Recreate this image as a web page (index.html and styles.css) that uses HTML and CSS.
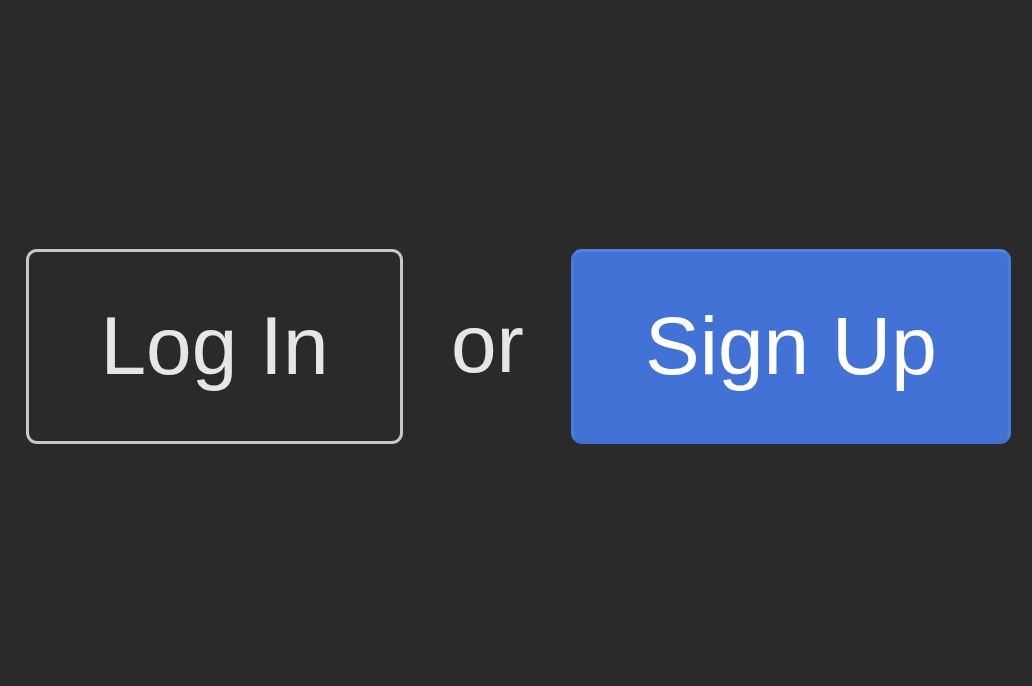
FILE: index.html
```html
<!DOCTYPE html>
<html>
<head>
<meta charset="utf-8">
<link rel="stylesheet" href="styles.css">
</head>
<body>
<div class="auth">
  <button class="btn btn-login">Log In</button>
  <span class="or">or</span>
  <button class="btn btn-signup">Sign Up</button>
</div>
</body>
</html>
```
FILE: styles.css
```css
html, body {
  margin: 0;
  padding: 0;
  height: 100%;
  background: #2a2a2a;
}
body {
  font-family: "Liberation Sans", Arial, sans-serif;
}
.auth {
  display: flex;
  align-items: center;
  height: 686px;
  padding: 6px 0 0 26px;
  box-sizing: border-box;
}
.btn {
  font-family: "Liberation Sans", Arial, sans-serif;
  font-size: 82px;
  box-sizing: border-box;
  height: 195px;
  padding: 0;
  display: flex;
  align-items: center;
  justify-content: center;
  cursor: pointer;
}
.btn-login {
  width: 377px;
  background: transparent;
  color: #e6e6e6;
  border: 3px solid #c8c8c8;
  border-radius: 11px;
}
.or {
  font-size: 82px;
  color: #e6e6e6;
  margin: 0 47px 0 48px;
  padding-bottom: 4px;
}
.btn-signup {
  width: 440px;
  background: #4272d6;
  color: #ffffff;
  border: 3px solid #4a7adc;
  border-top-color: #5482df;
  border-bottom-color: #3f6fd2;
  border-radius: 11px;
}
```
